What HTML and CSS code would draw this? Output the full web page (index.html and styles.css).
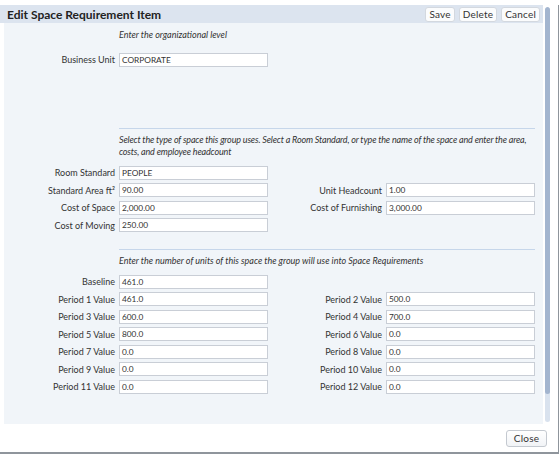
FILE: index.html
```html
<!DOCTYPE html>
<html>
<head>
<meta charset="utf-8">
<link rel="stylesheet" href="styles.css">
</head>
<body>
<div class="dialog">
  <div class="main">
    <div class="content-col">
      <div class="header">
        <div class="title">Edit Space Requirement Item</div>
        <div class="actions">
          <button class="btn">Save</button>
          <button class="btn">Delete</button>
          <button class="btn">Cancel</button>
        </div>
      </div>
      <div class="panel">
        <div class="form">
          <div class="note first">Enter the organizational level</div>
          <label class="lbl">Business Unit</label><div class="inp">CORPORATE</div>
          <div class="sep big"></div>
          <div class="note tight">Select the type of space this group uses. Select a Room Standard, or type the name of the space and enter the area, costs, and employee headcount</div>
          <label class="lbl after-note">Room Standard</label><div class="inp after-note">PEOPLE</div><div class="blank"></div><div class="blank"></div>
          <label class="lbl">Standard Area ft²</label><div class="inp">90.00</div>
          <label class="lbl">Unit Headcount</label><div class="inp">1.00</div>
          <label class="lbl">Cost of Space</label><div class="inp">2,000.00</div>
          <label class="lbl">Cost of Furnishing</label><div class="inp">3,000.00</div>
          <label class="lbl">Cost of Moving</label><div class="inp">250.00</div><div class="blank"></div><div class="blank"></div>
          <div class="sep mid"></div>
          <div class="note">Enter the number of units of this space the group will use into Space Requirements</div>
          <label class="lbl after-note">Baseline</label><div class="inp after-note">461.0</div><div class="blank"></div><div class="blank"></div>
          <label class="lbl">Period 1 Value</label><div class="inp">461.0</div>
          <label class="lbl">Period 2 Value</label><div class="inp">500.0</div>
          <label class="lbl">Period 3 Value</label><div class="inp">600.0</div>
          <label class="lbl">Period 4 Value</label><div class="inp">700.0</div>
          <label class="lbl">Period 5 Value</label><div class="inp">800.0</div>
          <label class="lbl">Period 6 Value</label><div class="inp">0.0</div>
          <label class="lbl">Period 7 Value</label><div class="inp">0.0</div>
          <label class="lbl">Period 8 Value</label><div class="inp">0.0</div>
          <label class="lbl">Period 9 Value</label><div class="inp">0.0</div>
          <label class="lbl">Period 10 Value</label><div class="inp">0.0</div>
          <label class="lbl">Period 11 Value</label><div class="inp">0.0</div>
          <label class="lbl">Period 12 Value</label><div class="inp">0.0</div>
        </div>
      </div>
    </div>
    <div class="scrollbar"><div class="thumb"></div></div>
  </div>
  <div class="footer">
    <button class="btn close">Close</button>
  </div>
</div>
</body>
</html>
```
FILE: styles.css
```css
html, body {
  margin: 0;
  padding: 0;
  background: #ffffff;
}
body {
  padding-top: 5px;
  font-family: Lato, "Noto Sans", sans-serif;
  color: #333;
}
.dialog {
  width: 558px;
  height: 447px;
  border-right: 1px solid #8f959c;
  border-bottom: 2px solid #8f959c;
  display: flex;
  flex-direction: column;
}
.main {
  display: flex;
  height: 419px;
}
.content-col {
  width: 543px;
  display: flex;
  flex-direction: column;
}
.header {
  height: 18px;
  background: #dce4ef;
  display: flex;
  align-items: center;
  justify-content: space-between;
  padding: 0 3px 0 7px;
}
.title {
  font-size: 12px;
  font-weight: 700;
  color: #222;
}
.actions {
  display: flex;
  gap: 4px;
}
.btn {
  font-family: Lato, "Noto Sans", sans-serif;
  font-size: 10px;
  letter-spacing: 0.2px;
  color: #333;
  background: #fbfcfd;
  border: 1px solid #d3d8df;
  border-radius: 3px;
  height: 15px;
  padding: 0 3px;
  line-height: 13px;
  margin: 0;
}
.panel {
  margin-left: 4px;
  height: 401px;
  background: #f1f5f9;
}
.form {
  display: grid;
  grid-template-columns: 111px 149px 110px 149px;
  column-gap: 4px;
  row-gap: 3.5px;
  align-items: center;
}
.note {
  grid-column: 2 / 5;
  font-style: italic;
  font-size: 9px;
  line-height: 11.5px;
  color: #333;
}
.note.tight {
  letter-spacing: -0.16px;
}
.note.first {
  margin-top: 6px;
  margin-bottom: 8.5px;
}
.lbl {
  text-align: right;
  font-size: 9px;
  color: #333;
  white-space: nowrap;
}
.inp {
  height: 14px;
  box-sizing: border-box;
  border: 1px solid #c9ced6;
  background: #fff;
  font-size: 8.3px;
  line-height: 12px;
  padding-left: 2px;
  color: #333;
}
.sep {
  grid-column: 2 / 5;
  height: 1px;
  background: #c6d6ea;
}
.sep.big {
  margin-top: 57.5px;
  margin-bottom: 2px;
}
.sep.mid {
  margin-top: 13.5px;
  margin-bottom: 1px;
}
.after-note {
  margin-top: 5px;
}
.scrollbar {
  margin-left: 2px;
  margin-top: 2px;
  width: 5px;
  height: 415px;
  background: #d9e2ee;
  border-radius: 3px;
  overflow: hidden;
}
.thumb {
  height: 387px;
  background: #a3b5cf;
  border-radius: 3px;
}
.footer {
  flex: 1;
  display: flex;
  justify-content: flex-end;
  align-items: flex-start;
  padding-top: 6px;
  padding-right: 11px;
}
.btn.close {
  height: 17px;
  width: 41px;
  border-color: #c4c9d0;
  background: linear-gradient(#ffffff, #f1f3f6);
}
```
